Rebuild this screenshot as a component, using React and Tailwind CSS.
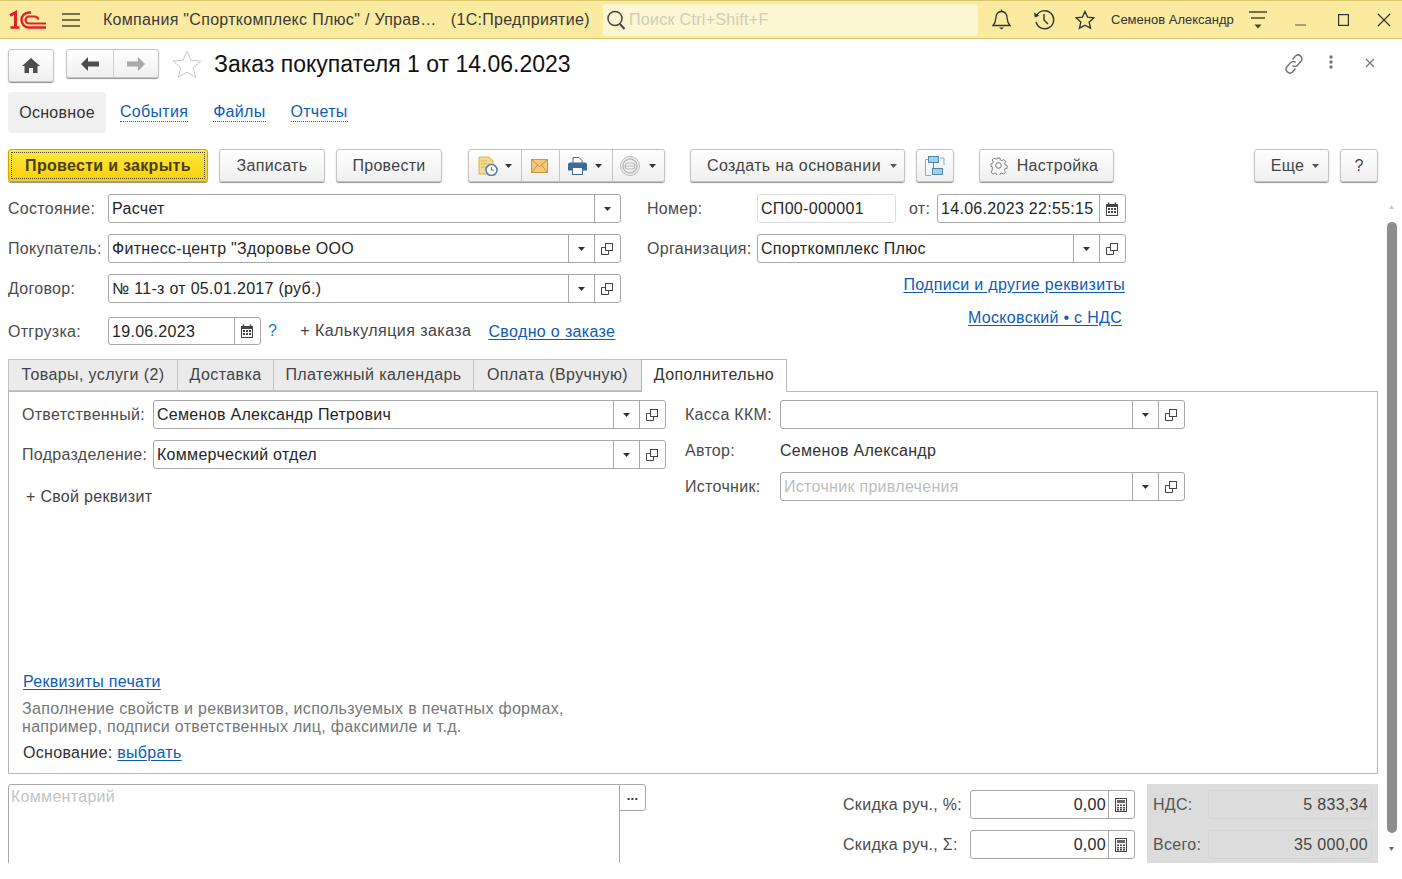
import React from "react";

const Tri = ({ c = "#333" }) => (
  <svg width="7" height="4" viewBox="0 0 7 4"><path d="M0 0h7L3.5 4z" fill={c} /></svg>
);
const OpenIcon = () => (
  <svg width="12" height="12" viewBox="0 0 12 12" fill="none" stroke="#444" strokeWidth="1">
    <rect x="4.5" y="0.5" width="7" height="7" />
    <path d="M4.5 4.5H0.5V11.5H7.5V7.5" />
  </svg>
);
const CalIcon = () => (
  <svg width="12" height="14" viewBox="0 0 12 14">
    <path d="M0 2h12v12H0z" fill="#444" />
    <path d="M2.5 0.5v3M9.5 0.5v3" stroke="#444" strokeWidth="1.5" />
    <path d="M1 5h10v8H1z" fill="#fff" />
    <path d="M2 6h2v2H2zM5 6h2v2H5zM8 6h2v2H8zM2 9h2v2H2zM5 9h2v2H5zM8 9h2v2H8z" fill="#444" />
  </svg>
);
const CalcIcon = () => (
  <svg width="12" height="14" viewBox="0 0 12 14">
    <rect x="0.5" y="0.5" width="11" height="13" fill="#fff" stroke="#444" />
    <path d="M2 2h8v3H2z" fill="#666" />
    <path d="M2 6.5h2v1.5H2zM5 6.5h2v1.5H5zM8 6.5h2v1.5H8zM2 9h2v1.5H2zM5 9h2v1.5H5zM8 9h2v1.5H8zM2 11h2v1.5H2zM5 11h2v1.5H5zM8 11h2v1.5H8z" fill="#444" />
  </svg>
);

const Field = ({ className = "", children, drop, open, cal, calc, ph, light, right }) => (
  <div className={`flex h-[29px] rounded-[3px] border bg-white ${light ? "border-[#dedede]" : "border-[#a8a8a8]"} ${className}`}>
    <div className={`min-w-0 flex-1 truncate pl-[3px] pr-[2px] leading-[27px] ${ph ? "text-[#bdbdbd]" : "text-[#262626]"} ${right ? "text-right" : ""}`}>{children}</div>
    {drop && <div className="flex w-[26px] items-center justify-center border-l border-[#a8a8a8]"><Tri /></div>}
    {open && <div className="flex w-[26px] items-center justify-center border-l border-[#a8a8a8] pr-[2px]"><OpenIcon /></div>}
    {cal && <div className="flex w-[26px] items-center justify-center border-l border-[#a8a8a8] pr-[2px]"><CalIcon /></div>}
    {calc && <div className="flex w-[26px] items-center justify-center border-l border-[#a8a8a8] pr-[2px]"><CalcIcon /></div>}
  </div>
);

const Btn = ({ className = "", children }) => (
  <div className={`flex h-[33px] items-center justify-center rounded-[3px] border border-[#c4c4c4] bg-linear-to-b from-white to-[#efefef] text-[#444] shadow-[0_1px_1px_#8f8f8f] ${className}`}>
    {children}
  </div>
);

const Link = ({ children, className = "" }) => (
  <span className={`text-[#0d5cb6] underline underline-offset-2 ${className}`}>{children}</span>
);
const NavLink = ({ children, className = "" }) => (
  <span className={`border-b border-dotted border-[#0d5cb6] leading-[18px] text-[#0d5cb6] ${className}`}>{children}</span>
);

const Label = ({ className = "", children }) => (
  <div className={`leading-[29px] text-[#4b4b4b] ${className}`}>{children}</div>
);

const Tab = ({ children, active, className = "" }) => (
  <div className={active
    ? `relative z-10 -ml-px h-[33px] border border-b-0 border-[#b8b8b8] bg-white pt-[3px] text-center whitespace-nowrap tracking-[0.4px] text-[#333] ${className}`
    : `-ml-px h-[32px] border border-[#c2c2c2] bg-[#ebebeb] pt-[3px] text-center whitespace-nowrap tracking-[0.4px] text-[#444] first:ml-0 ${className}`}>
    {children}
  </div>
);

const Logo = () => (
  <svg width="38" height="20" viewBox="0 0 38 20" fill="none" stroke="#e1202a">
    <path d="M1 5.5L6.5 2.5V17.5" strokeWidth="3" />
    <path d="M1.5 17.5h9" strokeWidth="2.6" />
    <path d="M22 2.500h-2a7.500 7.500 0 0 0 0 15h17" strokeWidth="2.4" />
    <path d="M37 13.500H20a3.500 3.500 0 0 1 0-7h6a3.500 3.500 0 0 1 3.200 3.200" strokeWidth="2.2" />
  </svg>
);

export default function App() {
  return (
    <div className="flex h-[879px] w-[1402px] flex-col overflow-hidden bg-white text-[16px] tracking-[0.3px] [font-family:'Liberation_Sans',Arial,sans-serif]">
      {/* Top bar */}
      <div className="flex h-[39px] shrink-0 items-center border-y border-[#d6c66c] bg-[#fbeba0] text-[#3a3a3a]">
        <div className="ml-[9px] w-[38px]"><Logo /></div>
        <svg className="ml-[15px]" width="18" height="14" viewBox="0 0 18 14" stroke="#4a4636" strokeWidth="1.4"><path d="M0 1h18M0 7h18M0 13h18" /></svg>
        <div className="ml-[23px] w-[487px] whitespace-nowrap">Компания "Спорткомплекс Плюс" / Управ…&nbsp;&nbsp;&nbsp;(1С:Предприятие)</div>
        <div className="ml-[13px] flex h-[32px] w-[375px] items-center rounded-[3px] bg-[#fdf6d2] pl-[3px]">
          <svg width="21" height="22" viewBox="0 0 21 22" fill="none" stroke="#444" strokeWidth="1.5"><circle cx="9" cy="9.5" r="7" /><path d="M14 15l4.5 5" strokeWidth="2" /></svg>
          <span className="ml-[2px] text-[#cfcdb9]">Поиск Ctrl+Shift+F</span>
        </div>
        <div className="flex w-[46px] justify-center">
          <svg width="19" height="21" viewBox="0 0 19 21" fill="none" stroke="#333" strokeWidth="1.3"><path d="M1 16.500c2-2 2.600-3.500 2.800-7C4 5 6 2.500 9.500 2.500S15 5 15.200 9.500c.2 3.500.8 5 2.800 7z" /><path d="M9.500.5v2" /><path d="M7 18.500h5l-2.500 2z" fill="#333" stroke="none" /></svg>
        </div>
        <div className="flex w-[40px] justify-center">
          <svg width="22" height="21" viewBox="0 0 22 21" fill="none" stroke="#333" strokeWidth="1.4"><path d="M3.500 7A9 9 0 1 1 3 13" /><path d="M1 3.500l.8 5 4.500-1.800z" fill="#333" stroke="none" /><path d="M11 5v6l4 4" /></svg>
        </div>
        <div className="flex w-[42px] justify-center">
          <svg width="20" height="20" viewBox="0 0 20 20" fill="none" stroke="#333" strokeWidth="1.4"><path d="M10 1.500l2.600 5.700 6.200.7-4.600 4.200 1.300 6.100L10 15.200l-5.500 3 1.300-6.100L1.200 7.900l6.200-.7z" /></svg>
        </div>
        <div className="ml-[5px] w-[123px] whitespace-nowrap text-[13px] tracking-normal text-[#333]">Семенов Александр</div>
        <div className="flex w-[48px] justify-center">
          <svg width="18" height="18" viewBox="0 0 18 18" stroke="#4a4636" strokeWidth="1.400"><path d="M0 1h18M2 7h14" /><path d="M5.500 13.500h7L9 17.500z" fill="#4a4636" stroke="none" /></svg>
        </div>
        <div className="flex w-[36px] justify-center pt-[10px]">
          <svg width="11" height="2" stroke="#555"><path d="M0 1h11" /></svg>
        </div>
        <div className="flex w-[50px] justify-center">
          <svg width="11" height="12" fill="none" stroke="#333" strokeWidth="1.200"><rect x="0.600" y="0.600" width="9.800" height="10.800" /></svg>
        </div>
        <div className="flex w-[32px] justify-center">
          <svg width="14" height="14" stroke="#333" strokeWidth="1.200"><path d="M1 1l12 12M13 1L1 13" /></svg>
        </div>
      </div>

      <div className="flex min-h-0 flex-1">
        <div className="w-[1386px] shrink-0 pl-[8px] pr-[8px]">
          {/* Title row */}
          <div className="flex h-[53px] items-start pt-[10px]">
            <Btn className="h-[29px] w-[46px]">
              <svg width="18" height="15" viewBox="0 0 18 15" fill="#4d4d4d"><path d="M9 0L0 8h2.500v7h4.500v-5h4v5h4.500V8H18z" /></svg>
            </Btn>
            <div className="ml-[12px] flex h-[29px] w-[93px] rounded-[3px] border border-[#c4c4c4] bg-linear-to-b from-white to-[#efefef] shadow-[0_1px_1px_#8f8f8f]">
              <div className="flex w-[47px] items-center justify-center border-r border-[#cfcfcf]">
                <svg width="18" height="14" viewBox="0 0 18 14" fill="#4d4d4d"><path d="M0 7l7-7v4.500h11v5H7V14z" /></svg>
              </div>
              <div className="flex flex-1 items-center justify-center">
                <svg width="18" height="14" viewBox="0 0 18 14" fill="#a8a8a8"><path d="M18 7l-7-7v4.500H0v5h11V14z" /></svg>
              </div>
            </div>
            <svg className="ml-[13px] mt-[1px]" width="30" height="29" viewBox="0 0 30 29" fill="none" stroke="#c9c9c9"><path d="M15 1l3.900 9.300 10 .8-7.600 6.500 2.300 9.800L15 22.200l-8.600 5.200 2.300-9.800L1.100 11.100l10-.8z" /></svg>
            <div className="ml-[12px] whitespace-nowrap text-[23px] leading-[30px] tracking-normal text-[#111]">Заказ покупателя 1 от 14.06.2023</div>
            <div className="flex-1" />
            <svg className="mt-[4px]" width="22" height="22" viewBox="0 0 22 22" fill="none" stroke="#777" strokeWidth="1.500"><path d="M9.500 6.500l3-3.500a3.800 3.800 0 0 1 5.500 5.200l-3.500 4a3.800 3.800 0 0 1-5.200.3" /><path d="M12.500 15.500l-3 3.500A3.800 3.800 0 0 1 4 13.800l3.500-4a3.800 3.800 0 0 1 5.200-.3" /></svg>
            <svg className="ml-[24px] mt-[6px]" width="4" height="14" viewBox="0 0 4 14" fill="#777"><circle cx="2" cy="2" r="1.700" /><circle cx="2" cy="7" r="1.700" /><circle cx="2" cy="12" r="1.700" /></svg>
            <svg className="ml-[32px] mr-[3px] mt-[9px]" width="10" height="10" stroke="#777" strokeWidth="1.200"><path d="M1 1l8 8M9 1L1 9" /></svg>
          </div>

          {/* Nav */}
          <div className="flex h-[41px] items-center">
            <div className="flex h-[41px] w-[98px] items-center justify-center rounded-[3px] bg-[#f0f0f0] text-[#333]">Основное</div>
            <NavLink className="ml-[14px]">События</NavLink>
            <NavLink className="ml-[25px]">Файлы</NavLink>
            <NavLink className="ml-[25px]">Отчеты</NavLink>
          </div>

          {/* Command bar */}
          <div className="mt-[16px] flex h-[34px] items-start">
            <div className="flex h-[33px] w-[200px] items-center justify-center rounded-[3px] border border-[#c9a800] bg-linear-to-b from-[#ffe93a] to-[#f8cf00] font-bold text-[#4a3f00] shadow-[0_1px_1px_#8f8f8f]">
              <div className="flex h-[27px] w-[194px] items-center justify-center border border-dotted border-[#444]">Провести и закрыть</div>
            </div>
            <Btn className="ml-[11px] w-[106px]">Записать</Btn>
            <Btn className="ml-[11px] w-[106px]">Провести</Btn>
            <div className="ml-[26px] flex h-[33px] w-[197px] rounded-[3px] border border-[#c4c4c4] bg-linear-to-b from-white to-[#efefef] shadow-[0_1px_1px_#8f8f8f]">
              <div className="flex w-[53px] items-center justify-center gap-[7px] border-r border-[#c4c4c4]">
                <svg width="20" height="20" viewBox="0 0 20 20"><path d="M1 1h10l4 4v13H1z" fill="#f2dc95" stroke="#d5b557" /><path d="M3 5h6M3 8h9M3 11h5" stroke="#d5b557" /><circle cx="13.500" cy="14" r="5.500" fill="#fff" stroke="#4f7ea8" strokeWidth="1.500" /><path d="M13.500 11v3h2.500" stroke="#d8444a" strokeWidth="1.200" fill="none" /></svg>
                <Tri />
              </div>
              <div className="flex w-[38px] items-center justify-center border-r border-[#c4c4c4] pr-[2px]">
                <svg width="17" height="14" viewBox="0 0 17 14"><rect x="0.500" y="0.500" width="16" height="13" fill="#f5c77b" stroke="#cf9440" /><path d="M1 1l7.500 6.500L16 1M1 13l5.500-7M16 13l-5.500-7" stroke="#cf9440" fill="none" /></svg>
              </div>
              <div className="flex w-[53px] items-center justify-center gap-[8px] border-r border-[#c4c4c4] pr-[2px]">
                <svg width="19" height="18" viewBox="0 0 19 18"><path d="M5 0.500h6l3 3v4H5z" fill="#fff" stroke="#4d6f8f" /><path d="M0 7.500a2 2 0 0 1 2-2h15a2 2 0 0 1 2 2v6H0z" fill="#3e6a93" /><rect x="4.500" y="10.500" width="10" height="7" fill="#fff" stroke="#3e6a93" /></svg>
                <Tri />
              </div>
              <div className="flex flex-1 items-center justify-center gap-[9px] pr-[1px]">
                <svg width="20" height="20" viewBox="0 0 20 20" fill="none" stroke="#bdbdbd"><circle cx="10" cy="10" r="9.500" fill="#f0f0f0" /><circle cx="10" cy="10" r="7" strokeWidth="1.500" /><rect x="5" y="7" width="10" height="6" rx="3" strokeWidth="1.200" /><path d="M5 10h10" /></svg>
                <Tri />
              </div>
            </div>
            <Btn className="ml-[25px] w-[215px] !justify-start gap-[9px] pl-[16px] tracking-[0.4px]">Создать на основании <Tri c="#555" /></Btn>
            <Btn className="ml-[11px] w-[38px]">
              <svg width="20" height="22" viewBox="0 0 20 22" fill="none"><rect x="3.500" y="1.500" width="10" height="6" fill="#a9cde3" stroke="#4a8bb3" /><rect x="7.500" y="13.500" width="10" height="6" fill="#a9cde3" stroke="#4a8bb3" /><path d="M8.500 7.500v6" stroke="#4a8bb3" /><path d="M3 4.500H.5v16H6M15 3H19v7" stroke="#7fb0cf" /></svg>
            </Btn>
            <Btn className="ml-[25px] w-[135px] gap-[9px] pr-[5px]">
              <svg width="18" height="18" viewBox="0 0 18 18" fill="none" stroke="#777"><path d="M7.500 1h3l.5 2.200 1.700.7 2-1.200 2 2-1.200 2 .7 1.700 2 .6v3l-2.200.5-.7 1.700 1.200 2-2 2-2-1.200-1.700.7-.5 2h-3l-.5-2-1.700-.7-2 1.200-2-2 1.200-2L2.600 10.700 1 10V7.500l1.800-.6.7-1.700-1.200-2 2-2 2 1.200 1.700-.7z" transform="scale(.94)" /><circle cx="8.500" cy="8.500" r="2.800" /></svg>
              Настройка
            </Btn>
            <div className="flex-1" />
            <Btn className="w-[75px] gap-[8px] pl-[7px]">Еще <Tri c="#555" /></Btn>
            <Btn className="ml-[11px] w-[38px] text-[#333]">?</Btn>
          </div>

          {/* Header form */}
          <div className="mt-[11px] flex">
            <div className="w-[639px] shrink-0">
              <div className="flex"><Label className="w-[100px]">Состояние:</Label><Field className="w-[513px]" drop>Расчет</Field></div>
              <div className="mt-[11px] flex"><Label className="w-[100px] whitespace-nowrap">Покупатель:</Label><Field className="w-[513px]" drop open>Фитнесс-центр "Здоровье ООО</Field></div>
              <div className="mt-[11px] flex"><Label className="w-[100px]">Договор:</Label><Field className="w-[513px]" drop open>№ 11-з от 05.01.2017 (руб.)</Field></div>
              <div className="mt-[14px] flex h-[28px] items-center">
                <Label className="w-[100px]">Отгрузка:</Label>
                <Field className="!h-[28px] w-[153px]" cal>19.06.2023</Field>
                <span className="ml-[7px] text-[#1679c4]">?</span>
                <span className="ml-[23px] whitespace-nowrap tracking-[0.45px] text-[#444]">+ Калькуляция заказа</span>
                <Link className="ml-[17px] mt-[1px] whitespace-nowrap tracking-[0.35px]">Сводно о заказе</Link>
              </div>
            </div>
            <div className="w-[480px] shrink-0">
              <div className="flex">
                <Label className="w-[110px]">Номер:</Label>
                <Field className="w-[139px]" light>СП00-000001</Field>
                <Label className="ml-[13px] w-[28px]">от:</Label>
                <Field className="w-[189px]" cal>14.06.2023 22:55:15</Field>
              </div>
              <div className="mt-[11px] flex"><Label className="w-[110px] whitespace-nowrap">Организация:</Label><Field className="w-[369px]" drop open>Спорткомплекс Плюс</Field></div>
              <div className="h-[40px] pr-[2px] pt-[8px] text-right leading-[28px] tracking-[0.32px]"><Link>Подписи и другие реквизиты</Link></div>
              <div className="mt-[1px] pr-[5px] text-right leading-[28px]"><Link>Московский • с НДС</Link></div>
            </div>
          </div>

          {/* Tabs */}
          <div className="mt-[14px] flex h-[32px] items-start">
            <Tab className="w-[170px]">Товары, услуги (2)</Tab>
            <Tab className="w-[97px]">Доставка</Tab>
            <Tab className="w-[201px]">Платежный календарь</Tab>
            <Tab className="w-[169px]">Оплата (Вручную)</Tab>
            <Tab active className="w-[146px]">Дополнительно</Tab>
          </div>

          {/* Pane */}
          <div className="flex h-[383px] flex-col border border-[#b8b8b8] pb-[11px] pl-[13px] pt-[8px]">
            <div className="flex">
              <div className="w-[663px] shrink-0">
                <div className="flex"><Label className="w-[131px] whitespace-nowrap">Ответственный:</Label><Field className="w-[513px]" drop open>Семенов Александр Петрович</Field></div>
                <div className="mt-[11px] flex"><Label className="w-[131px] whitespace-nowrap">Подразделение:</Label><Field className="w-[513px]" drop open>Коммерческий отдел</Field></div>
                <div className="ml-[4px] mt-[16px] text-[#444]">+ Свой реквизит</div>
              </div>
              <div>
                <div className="flex"><Label className="w-[95px] whitespace-nowrap">Касса ККМ:</Label><Field className="w-[405px]" drop open /></div>
                <div className="mt-[8px] flex h-[27px] items-start"><Label className="w-[95px] !leading-[27px]">Автор:</Label><span className="leading-[27px] text-[#333]">Семенов Александр</span></div>
                <div className="mt-[8px] flex"><Label className="w-[95px]">Источник:</Label><Field className="w-[405px]" drop open ph>Источник привлечения</Field></div>
              </div>
            </div>
            <div className="mt-auto">
              <div className="ml-[1px] leading-[18px]"><Link>Реквизиты печати</Link></div>
              <div className="mt-[9px] leading-[18px] text-[#777]">Заполнение свойств и реквизитов, используемых в печатных формах,<br />например, подписи ответственных лиц, факсимиле и т.д.</div>
              <div className="ml-[1px] mt-[8px] leading-[18px] text-[#333]">Основание: <Link>выбрать</Link></div>
            </div>
          </div>

          {/* Footer */}
          <div className="mt-[10px] flex h-[79px] overflow-hidden">
            <div className="h-[90px] w-[612px] shrink-0 rounded-tl-[3px] border border-[#a8a8a8] pl-[2px] leading-[24px] text-[#c4c4c4]">Комментарий</div>
            <div className="-ml-px flex h-[27px] w-[27px] shrink-0 items-start justify-center rounded-r-[3px] border border-[#a8a8a8] text-[#333]">
              <span className="text-[13px] font-bold leading-[22px]">...</span>
            </div>
            <div className="ml-[197px] w-[292px] shrink-0 pt-[6px]">
              <div className="flex"><Label className="w-[127px] whitespace-nowrap">Скидка руч., %:</Label><Field className="w-[165px]" calc right>0,00</Field></div>
              <div className="mt-[11px] flex"><Label className="w-[127px] whitespace-nowrap">Скидка руч., Σ:</Label><Field className="w-[165px]" calc right>0,00</Field></div>
            </div>
            <div className="ml-[12px] w-[231px] shrink-0 bg-[#dcdcdc] pl-[6px] pr-[6px] pt-[6px]">
              <div className="flex h-[29px]"><div className="w-[55px] leading-[29px] text-[#555]">НДС:</div><div className="flex-1 rounded-[3px] border border-[#d4d4d4] pr-[3px] text-right leading-[27px] text-[#444]">5 833,34</div></div>
              <div className="mt-[11px] flex h-[29px]"><div className="w-[55px] leading-[29px] text-[#555]">Всего:</div><div className="flex-1 rounded-[3px] border border-[#d4d4d4] pr-[3px] text-right leading-[27px] text-[#444]">35 000,00</div></div>
            </div>
          </div>
        </div>

        {/* Scrollbar */}
        <div className="flex h-[824px] w-[11px] shrink-0 flex-col items-center pt-[166px]">
          <svg width="5" height="4" viewBox="0 0 5 4"><path d="M0 4h5L2.500 0z" fill="#c8c8c8" /></svg>
          <div className="mt-[13px] h-[611px] w-[10px] shrink-0 rounded-[5px] bg-[#8e8e8e]" />
          <svg className="mt-[14px]" width="5" height="4" viewBox="0 0 5 4"><path d="M0 0h5L2.500 4z" fill="#666" /></svg>
        </div>
      </div>
    </div>
  );
}
